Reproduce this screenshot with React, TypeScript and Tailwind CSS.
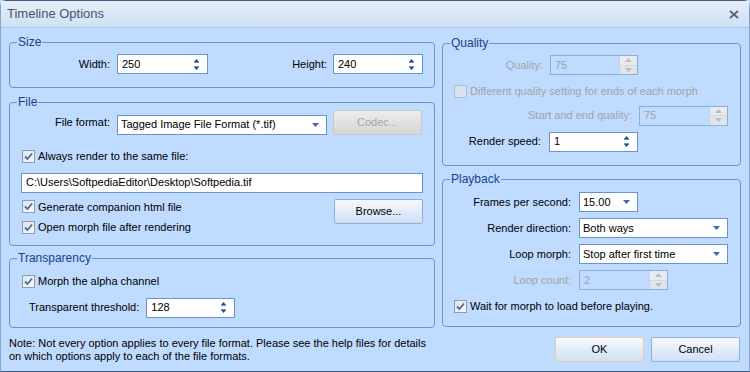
import React from 'react'

const font = { fontFamily: '"Liberation Sans", Arial, sans-serif' }

function Spin({ value, width, disabled }: { value: string; width: string; disabled?: boolean }) {
  return (
    <div
      className={`flex h-[20px] items-center justify-between border pl-[4px] ${width} ${
        disabled ? 'border-[#8eadd6] bg-[#bfdbff] text-[#a3a3a3]' : 'border-[#6a93cc] bg-white text-black'
      }`}
    >
      <span>{value}</span>
      {disabled ? (
        <div className="flex h-full w-[18px] flex-col border-l border-[#c9d3df]">
          <div className="flex flex-1 items-center justify-center bg-[#e9ecef]">
            <svg width="7" height="4" viewBox="0 0 7 4"><path d="M0 4L3.5 0L7 4Z" fill="#b9c0c8" /></svg>
          </div>
          <div className="flex flex-1 items-center justify-center border-t border-[#d3d8de] bg-[#e1e5e9]">
            <svg width="7" height="4" viewBox="0 0 7 4"><path d="M0 0L7 0L3.5 4Z" fill="#b9c0c8" /></svg>
          </div>
        </div>
      ) : (
        <div className="mr-[8px] flex flex-col items-center gap-[3px]">
          <svg width="5" height="4" viewBox="0 0 5 4"><path d="M0 3L2.5 0L5 3Z" fill="#1f4c8a" /><rect x="0" y="3" width="5" height="1" fill="#6f93c4" /></svg>
          <svg width="5" height="4" viewBox="0 0 5 4"><rect x="0" y="0" width="5" height="1" fill="#6f93c4" /><path d="M0 1L5 1L2.5 4Z" fill="#1f4c8a" /></svg>
        </div>
      )}
    </div>
  )
}

function Select({ value, width }: { value: string; width: string }) {
  return (
    <div className={`flex h-[20px] items-center justify-between border border-[#6a93cc] bg-white pl-[3px] ${width}`}>
      <span>{value}</span>
      <svg className="mr-[7px]" width="7" height="4" viewBox="0 0 7 4"><path d="M0 0L7 0L3.5 4Z" fill="#3f6aa8" /></svg>
    </div>
  )
}

function Check({ label, checked, disabled }: { label: string; checked?: boolean; disabled?: boolean }) {
  return (
    <div className="flex items-center gap-[3px]">
      <div
        className={`flex h-[13px] w-[13px] items-center justify-center border ${
          disabled ? 'border-[#b4bcc6] bg-[#d7e2ef]' : 'border-[#8c9db3] bg-gradient-to-br from-[#dfe5ec] to-[#f7f9fb]'
        }`}
      >
        {checked && (
          <svg width="9" height="9" viewBox="0 0 9 9">
            <path d="M1 4.5L3.5 7L8 1.5" stroke="#4c6c96" strokeWidth="1.8" fill="none" />
          </svg>
        )}
      </div>
      <span className={disabled ? 'text-[#a3a3a3]' : 'text-black'}>{label}</span>
    </div>
  )
}

function Button({ children, disabled, focused }: { children: React.ReactNode; disabled?: boolean; focused?: boolean }) {
  return (
    <div
      className={`flex h-[25px] w-[89px] items-center justify-center rounded-[2px] border ${
        disabled
          ? 'border-[#c8c8c8] bg-gradient-to-b from-[#ececec] to-[#d6d6d6] text-[#a6a6a6]'
          : focused
          ? 'border-[#e7cf8e] bg-gradient-to-b from-[#f6f9fd] to-[#cfe0f6] text-black'
          : 'border-[#94afd6] bg-gradient-to-b from-[#f6f9fd] to-[#cfe0f6] text-black'
      }`}
    >
      {children}
    </div>
  )
}

function Group({ title, className, children }: { title: string; className: string; children: React.ReactNode }) {
  return (
    <fieldset className={`rounded-[4px] border border-[#6993cd] px-0 ${className}`}>
      <legend className="ml-[7px] px-[1px] text-[12px] leading-[13px] text-[#15428b]">{title}</legend>
      {children}
    </fieldset>
  )
}

export default function App() {
  return (
    <div className="h-[372px] w-[750px] overflow-hidden bg-[#bfdbff] text-[11px] text-black" style={font}>
      <div className="flex h-[372px] flex-col rounded-t-[6px] border border-t-[#3d5a80] border-b-[#3d5a80] border-x-[#8aa6cc]">
        {/* Title bar */}
        <div className="flex h-[27px] items-center justify-between border-b border-[#a9c5ea] bg-gradient-to-b from-[#e7eef9] to-[#d0e0f5] pl-[6px] pr-[10px]">
          <span className="text-[13px] text-[#45546e]">Timeline Options</span>
          <svg width="10" height="9" viewBox="0 0 10 9">
            <path d="M1 1L9 8M9 1L1 8" stroke="#56627a" strokeWidth="1.7" />
          </svg>
        </div>

        {/* Body */}
        <div className="flex flex-1 flex-col px-[8px] pt-[8px]">
          <div className="flex gap-[7px]">
            {/* Left column */}
            <div className="flex w-[426px] flex-col">
              <Group title="Size" className="h-[52px]">
                <div className="mt-[5px] flex items-center">
                  <span className="w-[100px] text-right">Width:</span>
                  <div className="ml-[7px]"><Spin value="250" width="w-[91px]" /></div>
                  <span className="w-[119px] text-right">Height:</span>
                  <div className="ml-[6px]"><Spin value="240" width="w-[90px]" /></div>
                </div>
              </Group>

              <Group title="File" className="mt-[8px] h-[150px]">
                <div className="mt-[1px] flex items-center">
                  <span className="w-[100px] text-right">File format:</span>
                  <div className="ml-[7px] mt-[4px]"><Select value="Tagged Image File Format (*.tif)" width="w-[210px]" /></div>
                  <div className="ml-[6px]"><Button disabled>Codec...</Button></div>
                </div>
                <div className="ml-[12px] mt-[13px]">
                  <Check label="Always render to the same file:" checked />
                </div>
                <div className="ml-[11px] mt-[8px] flex h-[20px] w-[402px] items-center border border-[#6a93cc] bg-white pl-[4px]">
                  C:\Users\SoftpediaEditor\Desktop\Softpedia.tif
                </div>
                <div className="mt-[6px] flex items-start">
                  <div className="ml-[12px] mt-[0px] flex flex-col gap-[4px]">
                    <Check label="Generate companion html file" checked />
                    <Check label="Open morph file after rendering" checked />
                  </div>
                  <div className="ml-auto mr-[11px]"><Button>Browse...</Button></div>
                </div>
              </Group>

              <Group title="Transparency" className="mt-[6px] h-[76px]">
                <div className="ml-[12px] mt-[8px]">
                  <Check label="Morph the alpha channel" checked />
                </div>
                <div className="mt-[8px] flex items-center">
                  <span className="ml-[19px]">Transparent threshold:</span>
                  <div className="ml-[7px]"><Spin value="128" width="w-[89px]" /></div>
                </div>
              </Group>
            </div>

            {/* Right column */}
            <div className="flex w-[299px] flex-col">
              <Group title="Quality" className="mt-[1px] h-[129px]">
                <div className="mt-[5px] flex items-center">
                  <span className="w-[100px] text-right text-[#a3a3a3]">Quality:</span>
                  <div className="ml-[7px]"><Spin value="75" width="w-[88px]" disabled /></div>
                </div>
                <div className="ml-[11px] mt-[8px]">
                  <Check label="Different quality setting for ends of each morph" disabled />
                </div>
                <div className="mt-[6px] flex items-center">
                  <span className="w-[189px] text-right text-[#a3a3a3]">Start and end quality:</span>
                  <div className="ml-[7px]"><Spin value="75" width="w-[89px]" disabled /></div>
                </div>
                <div className="mt-[6px] flex items-center">
                  <span className="w-[98px] text-right">Render speed:</span>
                  <div className="ml-[8px]"><Spin value="1" width="w-[89px]" /></div>
                </div>
              </Group>

              <Group title="Playback" className="mt-[7px] h-[154px]">
                <div className="mt-[6px] flex flex-col gap-[6px]">
                  <div className="flex items-center">
                    <span className="w-[128px] text-right">Frames per second:</span>
                    <div className="ml-[8px]"><Select value="15.00" width="w-[59px]" /></div>
                  </div>
                  <div className="flex items-center">
                    <span className="w-[128px] text-right">Render direction:</span>
                    <div className="ml-[8px]"><Select value="Both ways" width="w-[149px]" /></div>
                  </div>
                  <div className="flex items-center">
                    <span className="w-[128px] text-right">Loop morph:</span>
                    <div className="ml-[8px]"><Select value="Stop after first time" width="w-[149px]" /></div>
                  </div>
                  <div className="flex items-center">
                    <span className="w-[128px] text-right text-[#a3a3a3]">Loop count:</span>
                    <div className="ml-[8px]"><Spin value="2" width="w-[89px]" disabled /></div>
                  </div>
                </div>
                <div className="ml-[11px] mt-[8px]">
                  <Check label="Wait for morph to load before playing." checked />
                </div>
              </Group>
            </div>
          </div>

          {/* Footer */}
          <div className="mt-[9px] flex items-start">
            <p className="w-[430px] leading-[13px]">
              Note: Not every option applies to every file format. Please see the help files for details on which options apply to each of the file formats.
            </p>
            <div className="ml-auto flex gap-[7px] pr-[1px]">
              <Button focused>OK</Button>
              <Button>Cancel</Button>
            </div>
          </div>
        </div>
      </div>
    </div>
  )
}
